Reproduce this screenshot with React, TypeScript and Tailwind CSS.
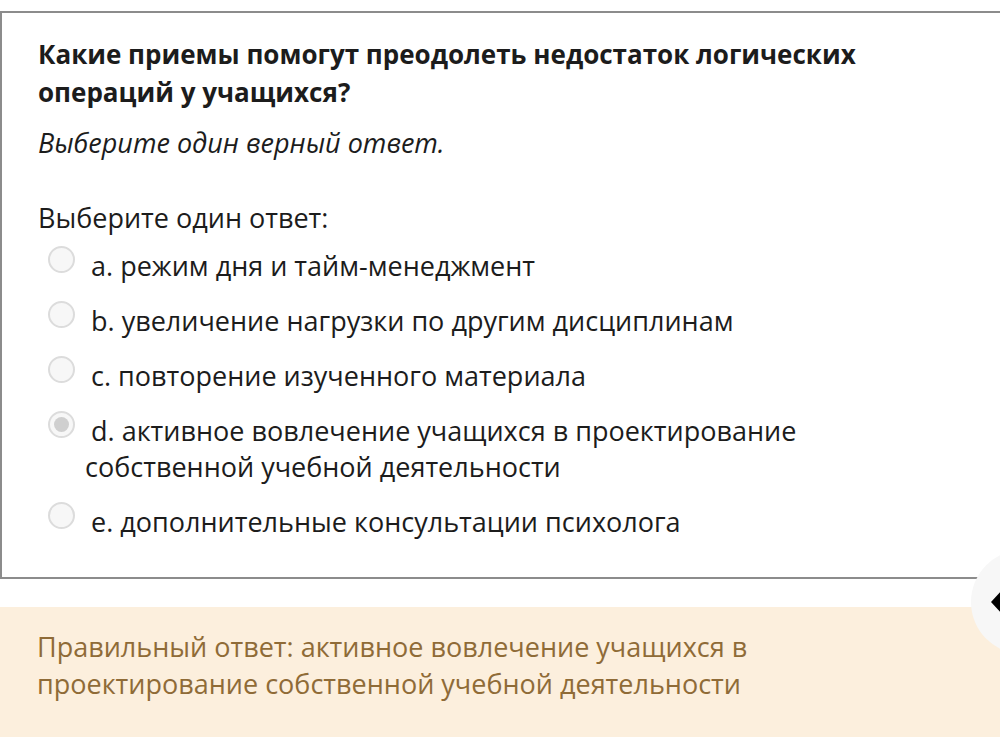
const options = [
  { key: 'a', text: 'режим дня и тайм-менеджмент' },
  { key: 'b', text: 'увеличение нагрузки по другим дисциплинам' },
  { key: 'c', text: 'повторение изученного материала' },
  { key: 'd', text: 'активное вовлечение учащихся в проектирование собственной учебной деятельности', checked: true },
  { key: 'e', text: 'дополнительные консультации психолога' },
]

function Radio({ checked }: { checked?: boolean }) {
  return (
    <span className="-mt-[2px] flex h-[27px] w-[27px] shrink-0 items-center justify-center rounded-full border-2 border-[#dcdcdc] bg-[#f7f7f7]">
      {checked && <span className="h-[15px] w-[15px] rounded-full bg-[#cfcfcf]" />}
    </span>
  )
}

export default function App() {
  return (
    <div
      className="relative h-[754px] w-[1000px] overflow-hidden bg-white text-[#1c1c1c]"
      style={{ fontFamily: '"Open Sans", "Noto Sans", sans-serif' }}
    >
      {/* Question box */}
      <div className="mt-[11px] w-[1010px] border-2 border-[#8c8c8c] pb-[37px] pl-[36px] pr-[120px] pt-[22px]">
        <h2 className="text-[26px] font-bold leading-[38px]">
          Какие приемы помогут преодолеть недостаток логических
          <br />
          операций у учащихся?
        </h2>
        <p className="mt-[13px] text-[27px] italic leading-[38px]">Выберите один верный ответ.</p>

        <p className="mt-[37px] text-[27px] leading-[38px]">Выберите один ответ:</p>
        <div className="mt-[11px] flex flex-col gap-[19px] pl-[10px]">
          {options.map(o => (
            <div key={o.key} className="flex items-start">
              <Radio checked={o.checked} />
              <span className="pl-[16px] text-[27px] leading-[36px]">
                {o.key}. {o.key === 'd' ? (
                  <>
                    активное вовлечение учащихся в проектирование
                    <br />
                    <span className="-ml-[6px]">собственной учебной деятельности</span>
                  </>
                ) : (
                  o.text
                )}
              </span>
            </div>
          ))}
        </div>
      </div>

      {/* Feedback */}
      <div className="mt-[28px] h-[130px] bg-[#fcefdd] px-[37px] pt-[21px] text-[27px] leading-[37px] text-[#8f6b37]">
        Правильный ответ: активное вовлечение учащихся в
        <br />
        проектирование собственной учебной деятельности
      </div>

      {/* Floating nav button */}
      <div className="absolute left-[971px] top-[550px] flex h-[104px] w-[104px] items-center rounded-full bg-[#f7f7f7] pl-[20px]">
        <svg width="16" height="24" viewBox="0 0 16 24">
          <path d="M11 0 L0 12 L11 24 L16 19 L9.5 12 L16 5 Z" fill="#000" />
        </svg>
      </div>
    </div>
  )
}
